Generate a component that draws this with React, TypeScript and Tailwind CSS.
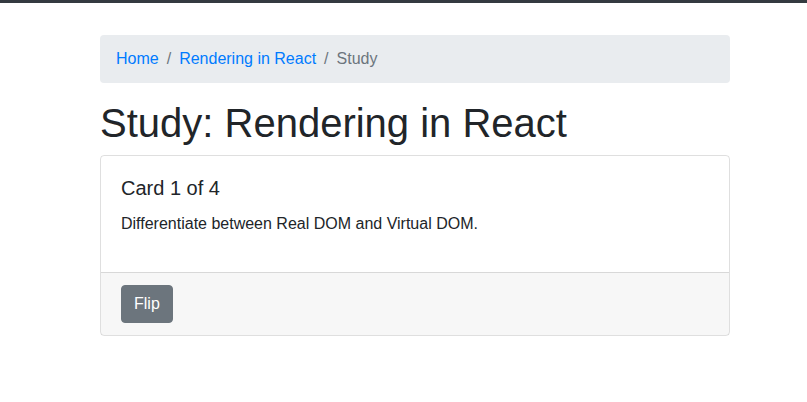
export default function App() {
  return (
    <div className="min-h-[402px] border-t-[3px] border-[#343a40] bg-white font-['Liberation_Sans',Arial,sans-serif] text-base text-[#212529]">
      <div className="ml-[100px] w-[630px] pt-8">
        <nav className="mb-4 flex items-center rounded bg-[#e9ecef] px-4 py-3 leading-6">
          <a href="#" className="text-[#007bff]">Home</a>
          <span className="px-2 text-[#6c757d]">/</span>
          <a href="#" className="text-[#007bff]">Rendering in React</a>
          <span className="px-2 text-[#6c757d]">/</span>
          <span className="text-[#6c757d]">Study</span>
        </nav>
        <h1 className="mb-2 text-[40px] leading-[48px] font-medium">Study: Rendering in React</h1>
        <div className="rounded border border-[rgba(0,0,0,0.125)]">
          <div className="p-5">
            <h5 className="mb-3 text-xl leading-6 font-medium">Card 1 of 4</h5>
            <p className="mb-4 leading-6">Differentiate between Real DOM and Virtual DOM.</p>
          </div>
          <div className="border-t border-[rgba(0,0,0,0.125)] bg-[rgba(0,0,0,0.03)] px-5 py-3">
            <button className="rounded border border-[#6c757d] bg-[#6c757d] px-3 py-1.5 leading-6 text-white">Flip</button>
          </div>
        </div>
      </div>
    </div>
  );
}
